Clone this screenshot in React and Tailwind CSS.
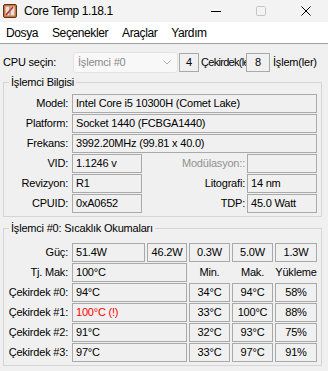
import React from "react";

const Box = ({ children, className = "" }) => (
  <div
    className={
      "h-[19px] border border-[#a9a9a9] flex items-center whitespace-nowrap overflow-hidden " +
      className
    }
  >
    {children}
  </div>
);

const Label = ({ children, className = "" }) => (
  <div className={"text-right pr-[2px] whitespace-nowrap " + className}>{children}</div>
);

function AppIcon() {
  return (
    <svg width="14" height="14" viewBox="0 0 14 14">
      <rect x="0.5" y="0.5" width="13" height="13" rx="1.5" fill="#c9743c" stroke="#5a3418" />
      <rect x="2.5" y="2.5" width="9" height="9" fill="#e8e0d8" />
      <path d="M3 11 L10 3" stroke="#d42020" strokeWidth="1.6" />
      <rect x="6" y="2.5" width="2" height="9" fill="#7a7a7a" opacity="0.5" />
    </svg>
  );
}

export default function App() {
  return (
    <div className="w-[328px] h-[371px] overflow-hidden bg-[#f0f0f0] text-black font-['Liberation_Sans',Arial,sans-serif]">
      {/* Title bar */}
      <div className="h-[22px] bg-[#f3f3f3] flex items-center">
        <div className="pl-[3px] pr-[7px] flex items-center">
          <AppIcon />
        </div>
        <span className="text-[12px] tracking-[-0.4px] leading-none">Core Temp 1.18.1</span>
        <div className="ml-auto flex h-full">
          <div className="w-[45px] flex items-center justify-center">
            <svg width="10" height="10" viewBox="0 0 10 10">
              <path d="M0 5.5 H10" stroke="#000" strokeWidth="1" />
            </svg>
          </div>
          <div className="w-[45px] flex items-center justify-center">
            <svg width="10" height="10" viewBox="0 0 10 10">
              <rect x="0.5" y="0.5" width="9" height="9" rx="1" fill="none" stroke="#c4c4c4" strokeWidth="1" />
            </svg>
          </div>
          <div className="w-[45px] flex items-center justify-center">
            <svg width="10" height="10" viewBox="0 0 10 10">
              <path d="M0.5 0.5 L9.5 9.5 M9.5 0.5 L0.5 9.5" stroke="#000" strokeWidth="1" />
            </svg>
          </div>
        </div>
      </div>

      {/* Menu bar */}
      <div className="h-[22px] bg-white border-b border-[#a0a0a0] flex items-center gap-[14px] pl-[6px] text-[12px] tracking-[-0.4px]">
        <span>Dosya</span>
        <span>Seçenekler</span>
        <span>Araçlar</span>
        <span>Yardım</span>
      </div>

      <div className="text-[11px] tracking-[-0.2px] leading-[13px]">
        {/* CPU select row */}
        <div className="flex items-center h-[21px] mt-[8px]">
          <span className="w-[73px] pl-[3px]">CPU seçin:</span>
          <div className="w-[105px] h-[21px] bg-[#f8f8f8] border border-[#e3e3e3] rounded-[3px] flex items-center pl-[4px] pr-[6px] text-[#8a8a8a]">
            <span>İşlemci #0</span>
            <svg className="ml-auto" width="8" height="5" viewBox="0 0 8 5">
              <path d="M0.5 0.5 L4 4 L7.5 0.5" fill="none" stroke="#b0b0b0" strokeWidth="1" />
            </svg>
          </div>
          <Box className="ml-[1px] w-[20px] justify-center">4</Box>
          <span className="w-[47px] overflow-hidden whitespace-nowrap pl-[2px] tracking-[-0.7px]">Çekirdek(ler)</span>
          <Box className="w-[24px] justify-center">8</Box>
          <span className="pl-[3px] whitespace-nowrap">İşlem(ler)</span>
        </div>

        {/* Processor info */}
        <fieldset className="ml-[3px] mr-[6px] mt-[3px] border border-[#d5d5d5] min-w-0 pt-[6px] pb-[3px] pr-[4px]">
          <legend className="ml-[5px] px-[2px] leading-[12px]">İşlemci Bilgisi</legend>
          <div className="grid grid-cols-[66px_70px_1fr_70px] gap-x-[2px] gap-y-[1px] items-center">
            <Label>Model:</Label>
            <Box className="col-span-3 pl-[3px]">Intel Core i5 10300H (Comet Lake)</Box>

            <Label>Platform:</Label>
            <Box className="col-span-3 pl-[3px]">Socket 1440 (FCBGA1440)</Box>

            <Label>Frekans:</Label>
            <Box className="col-span-3 pl-[3px]">3992.20MHz (99.81 x 40.0)</Box>

            <Label>VID:</Label>
            <Box className="pl-[3px]">1.1246 v</Box>
            <div className="text-right whitespace-nowrap text-[#909090]">Modülasyon::</div>
            <Box className="pl-[3px]"></Box>

            <Label>Revizyon:</Label>
            <Box className="pl-[3px]">R1</Box>
            <div className="text-right whitespace-nowrap">Litografi:</div>
            <Box className="pl-[3px]">14 nm</Box>

            <Label>CPUID:</Label>
            <Box className="pl-[3px]">0xA0652</Box>
            <div className="text-right whitespace-nowrap">TDP:</div>
            <Box className="pl-[3px]">45.0 Watt</Box>
          </div>
        </fieldset>

        {/* Temperature readings */}
        <fieldset className="ml-[3px] mr-[6px] mt-[5px] border border-[#d5d5d5] min-w-0 pt-[9px] pb-[3px] pr-[4px]">
          <legend className="ml-[5px] px-[2px] leading-[12px]">İşlemci #0: Sıcaklık Okumaları</legend>
          <div className="grid grid-cols-[66px_73px_40px_41px_41px_42px] gap-x-[2px] gap-y-[1px] items-center">
            <Label>Güç:</Label>
            <Box className="pl-[3px]">51.4W</Box>
            <Box className="justify-center">46.2W</Box>
            <Box className="justify-center">0.3W</Box>
            <Box className="justify-center">5.0W</Box>
            <Box className="justify-center">1.3W</Box>

            <Label>Tj. Mak:</Label>
            <Box className="col-span-2 pl-[3px]">100°C</Box>
            <div className="text-center">Min.</div>
            <div className="text-center">Mak.</div>
            <div className="text-center">Yükleme</div>

            <Label>Çekirdek #0:</Label>
            <Box className="col-span-2 pl-[3px]">94°C</Box>
            <Box className="justify-center">34°C</Box>
            <Box className="justify-center">94°C</Box>
            <Box className="justify-center">58%</Box>

            <Label>Çekirdek #1:</Label>
            <Box className="col-span-2 pl-[3px] text-[#ff0000]">100°C (!)</Box>
            <Box className="justify-center">33°C</Box>
            <Box className="justify-center">100°C</Box>
            <Box className="justify-center">88%</Box>

            <Label>Çekirdek #2:</Label>
            <Box className="col-span-2 pl-[3px]">91°C</Box>
            <Box className="justify-center">32°C</Box>
            <Box className="justify-center">93°C</Box>
            <Box className="justify-center">75%</Box>

            <Label>Çekirdek #3:</Label>
            <Box className="col-span-2 pl-[3px]">97°C</Box>
            <Box className="justify-center">33°C</Box>
            <Box className="justify-center">97°C</Box>
            <Box className="justify-center">91%</Box>
          </div>
        </fieldset>
      </div>
    </div>
  );
}
